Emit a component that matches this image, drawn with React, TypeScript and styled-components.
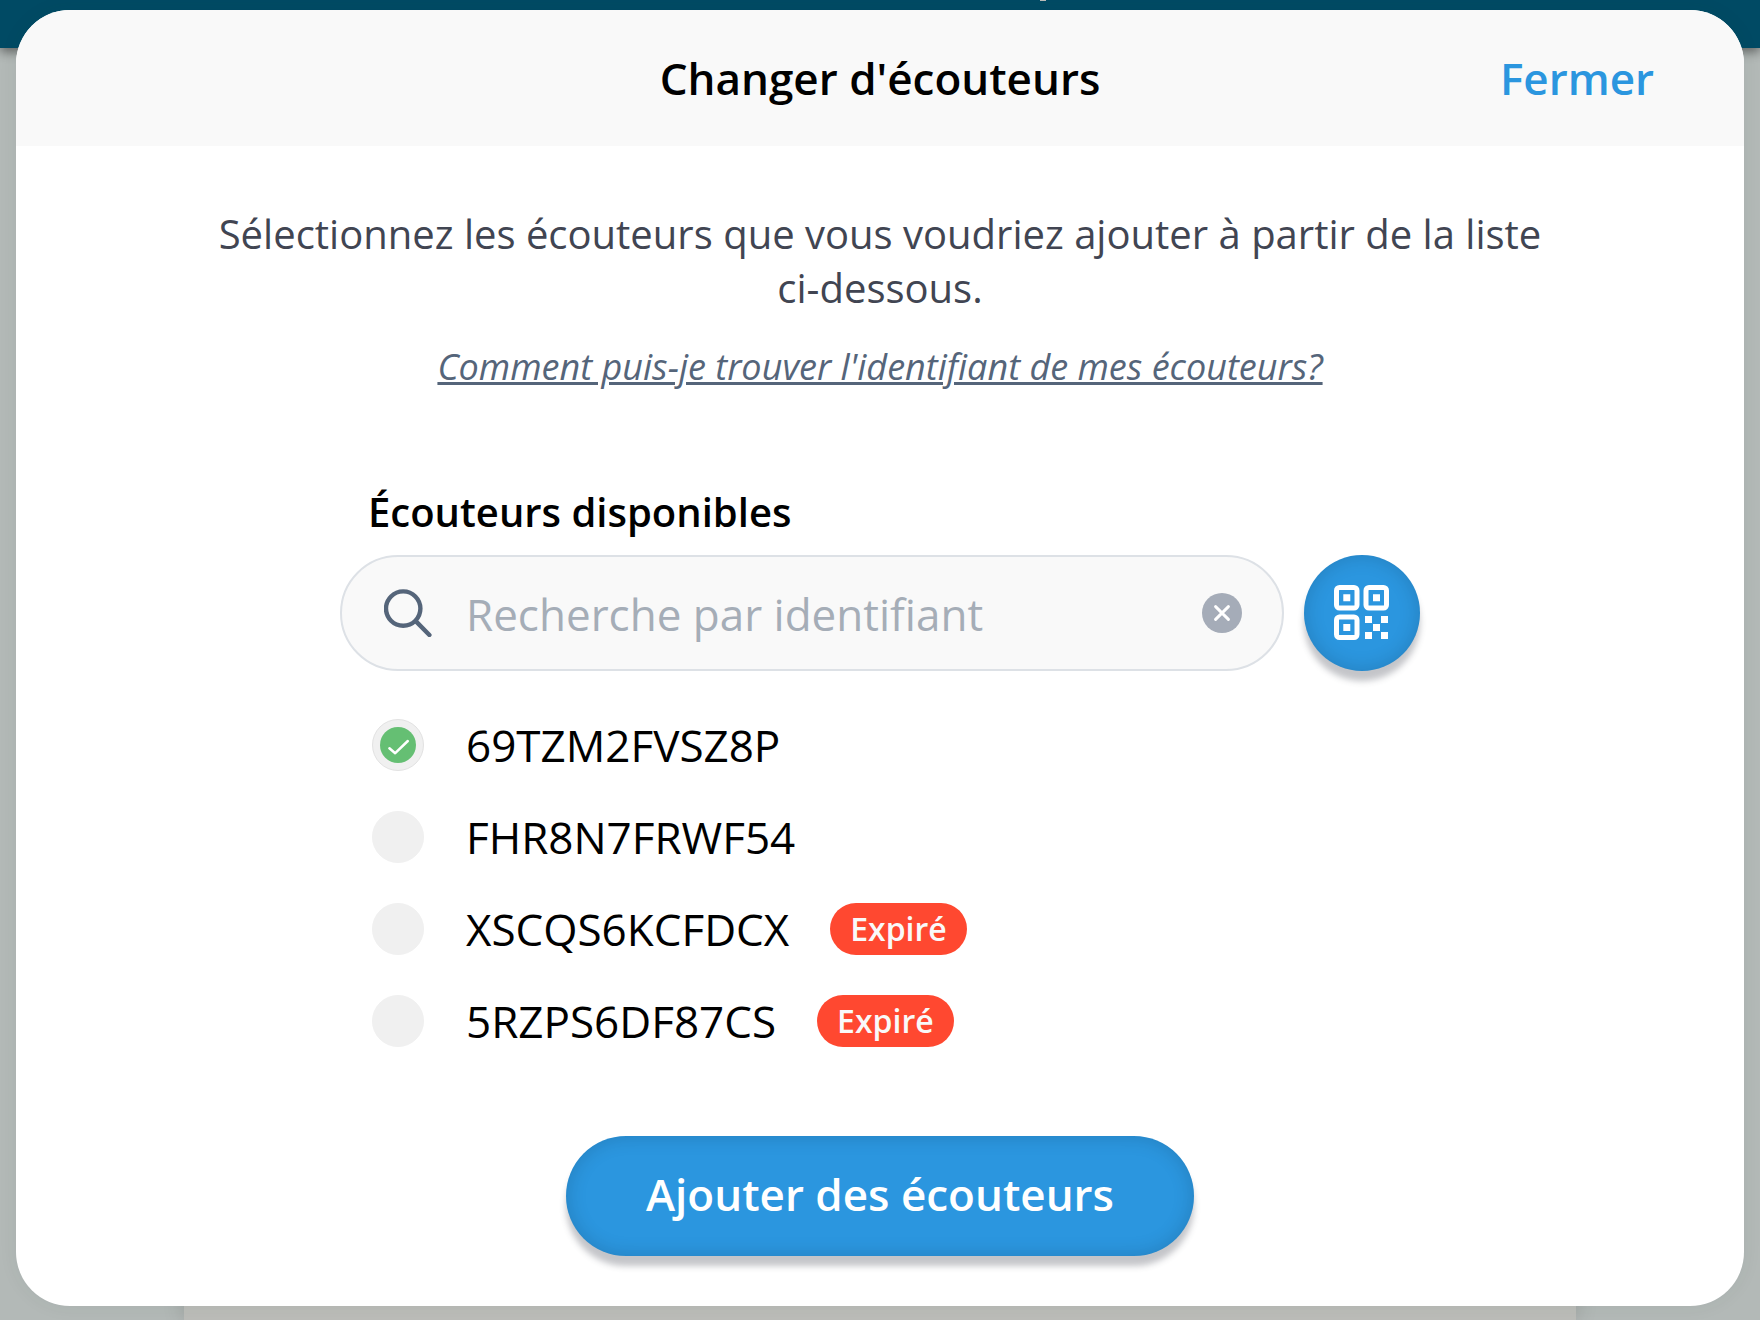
import React, { useState } from 'react';
import styled, { createGlobalStyle } from 'styled-components';

const GlobalStyle = createGlobalStyle`
  *, *::before, *::after { box-sizing: border-box; }
  body { margin: 0; background: #b3b8b6; }
  body, button, input { font-family: 'Open Sans', 'Noto Sans', sans-serif; }
`;

const Page = styled.div`
  display: flex;
  flex-direction: column;
  min-height: 100vh;
  background: #b3b9b7;
`;

const TopBar = styled.div`
  height: 48px;
  flex: none;
  background: #004a64;
  box-shadow: 0 4px 10px rgba(0, 0, 0, 0.45);
  z-index: 1;
`;

const TopBarMark = styled.div`
  width: 6px;
  height: 1px;
  margin-left: 59.1%;
  background: #bdbdb9;
`;

const PageCard = styled.div`
  flex: 1;
  margin: 0 184px;
  background: #bbbcb8;
  box-shadow: 0 0 20px rgba(0, 0, 0, 0.15);
`;

const Overlay = styled.div`
  position: absolute;
  top: 0;
  left: 0;
  right: 0;
  z-index: 2;
  padding: 10px 16px 14px;
`;

const Dialog = styled.section`
  border-radius: 54px;
  overflow: hidden;
  background: #fff;
  box-shadow: 0 0 20px rgba(0, 60, 50, 0.06);
`;

const Header = styled.header`
  display: grid;
  grid-template-columns: 1fr auto 1fr;
  align-items: center;
  height: 136px;
  padding: 0 90px;
  background: #f9f9f9;
`;

const Title = styled.h2`
  grid-column: 2;
  margin: 0;
  font-size: 44px;
  line-height: 60px;
  font-weight: 600;
  color: #000;
`;

const CloseButton = styled.button`
  justify-self: end;
  padding: 0;
  border: 0;
  background: none;
  font-size: 44px;
  line-height: 60px;
  font-weight: 600;
  color: #2b96df;
  cursor: pointer;
`;

const Body = styled.div`
  display: flex;
  flex-direction: column;
  align-items: center;
  padding: 61px 190px 50px;
`;

const Intro = styled.p`
  margin: 0 0 28px;
  font-size: 40px;
  line-height: 54px;
  text-align: center;
  color: #414552;
`;

const HelpLink = styled.a`
  margin-bottom: 94px;
  font-size: 36px;
  line-height: 48px;
  font-style: italic;
  color: #55657a;
  text-decoration: underline;
`;

const Picker = styled.div`
  display: flex;
  flex-direction: column;
  width: 100%;
  max-width: 1080px;
`;

const PickerLabel = styled.label`
  padding: 0 28px;
  margin-bottom: 16px;
  font-size: 40px;
  line-height: 54px;
  font-weight: 600;
  color: #000;
`;

const SearchRow = styled.div`
  display: flex;
  gap: 20px;
`;

const SearchBox = styled.div`
  flex: 1;
  display: flex;
  align-items: center;
  gap: 34px;
  height: 116px;
  padding: 0 40px 0 42px;
  border: 2px solid #dde1e6;
  border-radius: 58px;
  background: #f9f9f9;
`;

const SearchInput = styled.input`
  flex: 1;
  min-width: 0;
  height: 64px;
  padding: 2px 0 0;
  border: 0;
  outline: 0;
  background: none;
  font-size: 44px;
  color: #000;
  &::placeholder { color: #a5adb7; opacity: 1; }
`;

const ClearButton = styled.button`
  display: grid;
  place-items: center;
  width: 40px;
  height: 40px;
  padding: 0;
  border: 0;
  border-radius: 50%;
  background: #a5acb8;
  cursor: pointer;
`;

const RaisedButton = styled.button`
  border: 0;
  background: #2b96df;
  color: #fff;
  box-shadow: 0 10px 6px rgba(60, 62, 75, 0.3), inset 0 0 20px rgba(0, 0, 0, 0.16);
  cursor: pointer;
`;

const ScanButton = styled(RaisedButton)`
  display: grid;
  place-items: center;
  width: 116px;
  height: 116px;
  padding: 0;
  border-radius: 50%;
`;

const SubmitButton = styled(RaisedButton)`
  height: 120px;
  margin-top: 89px;
  padding: 0 80px 4px;
  border-radius: 60px;
  font-size: 44px;
  line-height: 60px;
  font-weight: 600;
`;

const Options = styled.ul`
  display: flex;
  flex-direction: column;
  gap: 40px;
  margin: 48px 0 0;
  padding: 0 32px;
  list-style: none;
`;

const Option = styled.label`
  display: flex;
  align-items: center;
  width: fit-content;
  cursor: pointer;
`;

const RadioSlot = styled.span`
  display: grid;
  width: 52px;
  height: 52px;
  margin-right: 42px;
  place-items: center;
  & > * { grid-area: 1 / 1; }
`;

const Radio = styled.input`
  appearance: none;
  width: 52px;
  height: 52px;
  margin: 0;
  border: 1px solid #f0f0f0;
  border-radius: 50%;
  background: #f0f0f0;
  &:checked { border-color: #e2e2e2; }
`;

const CheckIcon = styled.svg`
  pointer-events: none;
`;

const Code = styled.span`
  font-size: 44px;
  line-height: 52px;
  color: #000;
`;

const Badge = styled.span`
  margin-left: 41px;
  padding: 0 20px;
  border-radius: 26px;
  background: #ff4830;
  font-size: 32px;
  line-height: 52px;
  font-weight: 600;
  color: #f9f9f9;
`;

const devices = [
  { id: '69TZM2FVSZ8P', expired: false },
  { id: 'FHR8N7FRWF54', expired: false },
  { id: 'XSCQS6KCFDCX', expired: true },
  { id: '5RZPS6DF87CS', expired: true },
];

const SearchIcon = () => (
  <svg width="48" height="48" viewBox="0 0 48 48" fill="none" stroke="#55657a" strokeWidth="4.4" strokeLinecap="round" aria-hidden="true">
    <circle cx="19.2" cy="19.6" r="17.2" />
    <path d="M32 32.4L45.4 46" />
  </svg>
);

const QrIcon = () => (
  <svg width="56" height="56" viewBox="0 0 56 56" fill="none" aria-hidden="true">
    <g stroke="#fff" strokeWidth="5">
      <rect x="2.5" y="2.5" width="20.5" height="20.5" rx="3" />
      <rect x="32" y="2.5" width="20.5" height="20.5" rx="3" />
      <rect x="2.5" y="32" width="20.5" height="20.5" rx="3" />
    </g>
    <path
      fill="#fff"
      d="M9.3 9.3h7v7h-7zM39 9.3h7v7h-7zM9.3 39h7v7h-7zM31 31h7v7h-7zM47 31h7v7h-7zM39 39h7v7h-7zM31 47h7v7h-7zM47 47h7v7h-7z"
    />
  </svg>
);

export default function App() {
  const [query, setQuery] = useState('');
  const [selected, setSelected] = useState(devices[0].id);

  return (
    <>
      <GlobalStyle />
      <Page>
        <TopBar>
          <TopBarMark />
        </TopBar>
        <PageCard />
      </Page>
      <Overlay>
        <Dialog role="dialog" aria-labelledby="dialog-title">
          <Header>
            <Title id="dialog-title">Changer d'écouteurs</Title>
            <CloseButton type="button">Fermer</CloseButton>
          </Header>
          <Body>
            <Intro>
              Sélectionnez les écouteurs que vous voudriez ajouter à partir de la liste ci-dessous.
            </Intro>
            <HelpLink href="#aide">Comment puis-je trouver l'identifiant de mes écouteurs?</HelpLink>
            <Picker>
              <PickerLabel htmlFor="search">Écouteurs disponibles</PickerLabel>
              <SearchRow>
                <SearchBox>
                  <SearchIcon />
                  <SearchInput
                    id="search"
                    type="text"
                    placeholder="Recherche par identifiant"
                    value={query}
                    onChange={(e) => setQuery(e.target.value)}
                  />
                  <ClearButton type="button" aria-label="Effacer" onClick={() => setQuery('')}>
                    <svg width="16" height="16" viewBox="0 0 16 16" fill="none" stroke="#fff" strokeWidth="2.9" strokeLinecap="round" aria-hidden="true">
                      <path d="M1.6 1.6L14.4 14.4M14.4 1.6L1.6 14.4" />
                    </svg>
                  </ClearButton>
                </SearchBox>
                <ScanButton type="button" aria-label="Scanner un code QR">
                  <QrIcon />
                </ScanButton>
              </SearchRow>
              <Options>
                {devices.map(({ id, expired }) => (
                  <li key={id}>
                    <Option>
                      <RadioSlot>
                        <Radio
                          type="radio"
                          name="device"
                          value={id}
                          checked={selected === id}
                          onChange={() => setSelected(id)}
                        />
                        {selected === id && (
                          <CheckIcon width="36" height="36" viewBox="0 0 36 36" fill="none" aria-hidden="true">
                            <circle cx="18" cy="18" r="18" fill="#65bf73" />
                            <path d="M9.4 21.2L15.2 26.2L27.8 14" stroke="#fff" strokeWidth="2.5" strokeLinecap="round" strokeLinejoin="round" />
                          </CheckIcon>
                        )}
                      </RadioSlot>
                      <Code>{id}</Code>
                      {expired && <Badge>Expiré</Badge>}
                    </Option>
                  </li>
                ))}
              </Options>
            </Picker>
            <SubmitButton type="button">Ajouter des écouteurs</SubmitButton>
          </Body>
        </Dialog>
      </Overlay>
    </>
  );
}
